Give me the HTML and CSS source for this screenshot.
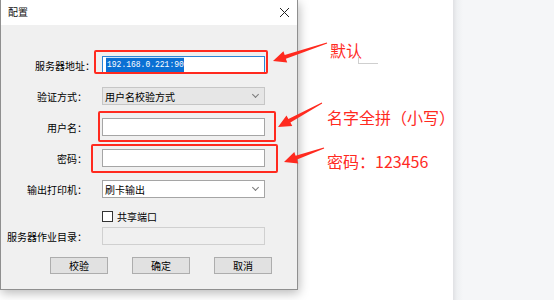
FILE: index.html
```html
<!DOCTYPE html>
<html lang="zh-CN">
<head>
<meta charset="UTF-8" />
<meta name="viewport" content="width=device-width, initial-scale=1.0" />
<title>配置</title>
<link rel="stylesheet" href="styles.css">
</head>
<body>
  <div class="screen">
    <div class="dialog">
      <div class="titlebar">
        <span class="title">配置</span>
        <svg class="close" width="11" height="11" viewBox="0 0 11 11">
          <path d="M1 1 L10 10 M10 1 L1 10" stroke="#222" stroke-width="1" fill="none" />
        </svg>
      </div>

      <div class="dlg-body">
        <div class="row">
          <span class="lbl wide">服务器地址：</span>
          <div class="field focus"><span class="selected">192.168.0.221:90</span></div>
        </div>
        <div class="row">
          <span class="lbl">验证方式：</span>
          <div class="field combo readonly">用户名校验方式<span class="chev"></span></div>
        </div>
        <div class="row">
          <span class="lbl">用户名：</span>
          <div class="field"></div>
        </div>
        <div class="row">
          <span class="lbl">密码：</span>
          <div class="field"></div>
        </div>
        <div class="row">
          <span class="lbl">输出打印机：</span>
          <div class="field combo">刷卡输出<span class="chev"></span></div>
        </div>
        <div class="row check-row">
          <span class="lbl"></span>
          <span class="checkbox"></span>
          <span class="check-text">共享端口</span>
        </div>
        <div class="row dir-row">
          <span class="lbl">服务器作业目录：</span>
          <div class="field disabled"></div>
        </div>

        <div class="buttons">
          <div class="btn">校验</div>
          <div class="btn">确定</div>
          <div class="btn">取消</div>
        </div>
      </div>
    </div>

    <div class="canvas"></div>
    <div class="side"></div>

    <!-- annotations drawn on top of the screenshot -->
    <div class="marks">
      <div class="red-box box-1"></div>
      <div class="red-box box-2"></div>
      <div class="red-box box-3"></div>

      <svg class="arrows" width="554" height="300" viewBox="0 0 554 300">
        <polygon fill="#ff2a1f" points="326.8,42.5 284.7,55.0 283.4,51.2 273,61 287.2,62.6 285.9,58.8 327.2,43.5" />
        <polygon fill="#ff2a1f" points="321.8,102.6 288.4,119.0 286.5,115.5 278,127 292.3,126.1 290.4,122.6 322.2,103.4" />
        <polygon fill="#ff2a1f" points="323.8,147.5 295.6,155.8 294.3,152.0 284,162 298.3,163.4 297.0,159.6 324.2,148.5" />
      </svg>

      <div class="note note-1">默认</div>
      <div class="note note-2">名字全拼（小写）</div>
      <div class="note note-3">密码：123456</div>

      <div class="cursor-mark"></div>
    </div>
  </div>
</body>
</html>
```

FILE: styles.css
```css
* {
  box-sizing: border-box;
}

html, body {
  margin: 0;
  padding: 0;
  background: #ffffff;
}

body {
  font-family: "Noto Sans CJK SC", "Noto Sans", sans-serif;
  font-size: 10px;
  color: #000;
}

.screen {
  position: relative;
  width: 554px;
  height: 300px;
  display: flex;
  overflow: hidden;
}

/* dialog window */
.dialog {
  width: 298px;
  height: 290px;
  background: #f0f0f0;
  border: 1px solid #8f8f8f;
  border-top: none;
  box-shadow: 1px 3px 10px rgba(0, 0, 0, 0.28);
  display: flex;
  flex-direction: column;
  position: relative;
  z-index: 1;
}

.titlebar {
  height: 25px;
  background: #ffffff;
  display: flex;
  align-items: center;
  justify-content: space-between;
  padding: 0 7px 1px 7px;
}

.title {
  font-size: 10px;
  line-height: 1;
  color: #111;
}

.dlg-body {
  flex: 1;
  padding-top: 31px;
  display: flex;
  flex-direction: column;
}

.row {
  display: flex;
  align-items: center;
  height: 18px;
  margin-bottom: 13px;
}

.lbl {
  width: 86px;
  margin-right: 15px;
  text-align: right;
  white-space: nowrap;
  font-size: 10px;
}

.lbl.wide {
  width: 94px;
  margin-right: 7px;
}

.field {
  width: 163px;
  height: 18px;
  background: #ffffff;
  border: 1px solid #a5a5a5;
  display: flex;
  align-items: center;
  padding-left: 3px;
  font-size: 10px;
  position: relative;
}

.field.focus {
  border-color: #2a86d6;
}

.selected {
  background: #0a70d4;
  color: #ffffff;
  font-family: "Liberation Mono", monospace;
  font-size: 8px;
  line-height: 12px;
  height: 12px;
  padding: 0 0 0 1px;
  display: inline-block;
  transform: scaleY(1.2);
}

.field.combo {
  padding-left: 2px;
}

.field.readonly {
  background: #e6e6e6;
  border-color: #c6c6c6;
}

.field.disabled {
  background: #f0f0f0;
  border-color: #d0d0d0;
}

.chev {
  position: absolute;
  right: 6px;
  top: 4px;
  width: 5px;
  height: 5px;
  border-right: 1px solid #7a7a7a;
  border-bottom: 1px solid #7a7a7a;
  transform: rotate(45deg);
}

.check-row {
  height: 12px;
  margin-top: -1px;
  margin-bottom: 5px;
}

.checkbox {
  width: 11px;
  height: 11px;
  border: 1px solid #333;
  background: #ffffff;
  margin-right: 4px;
}

.check-text {
  font-size: 10px;
}

.buttons {
  display: flex;
  gap: 24px;
  padding-left: 49px;
  margin-top: -1px;
}

.btn {
  width: 58px;
  height: 17px;
  background: #e1e1e1;
  border: 1px solid #adadad;
  display: flex;
  align-items: center;
  justify-content: center;
  font-size: 10px;
}

/* page behind the dialog */
.canvas {
  flex: 1;
  background: #ffffff;
}

.side {
  width: 101px;
  background: linear-gradient(to right, #e0e1e4 0, #eef0f2 4px, #f5f6f8 10px);
}

/* annotations */
.marks {
  position: absolute;
  left: 0;
  top: 0;
  width: 554px;
  height: 300px;
  pointer-events: none;
  z-index: 2;
}

.arrows {
  position: absolute;
  left: 0;
  top: 0;
}

.red-box {
  position: absolute;
  border: 2px solid #ff2a1f;
  border-radius: 2px;
}

.box-1 {
  left: 94px;
  top: 50px;
  width: 174px;
  height: 24px;
}

.box-2 {
  left: 98px;
  top: 111px;
  width: 178px;
  height: 31px;
}

.box-3 {
  left: 91px;
  top: 144px;
  width: 187px;
  height: 29px;
}

.note {
  position: absolute;
  color: #ff2a1f;
  font-size: 16px;
  line-height: 20px;
  white-space: nowrap;
}

.note-1 {
  left: 330px;
  top: 40px;
}

.note-2 {
  left: 327px;
  top: 107px;
}

.note-3 {
  left: 327px;
  top: 151px;
}

.cursor-mark {
  position: absolute;
  left: 358px;
  top: 56px;
  width: 20px;
  height: 8px;
  border-left: 1px solid #cfcfcf;
  border-bottom: 1px solid #cfcfcf;
}
```
